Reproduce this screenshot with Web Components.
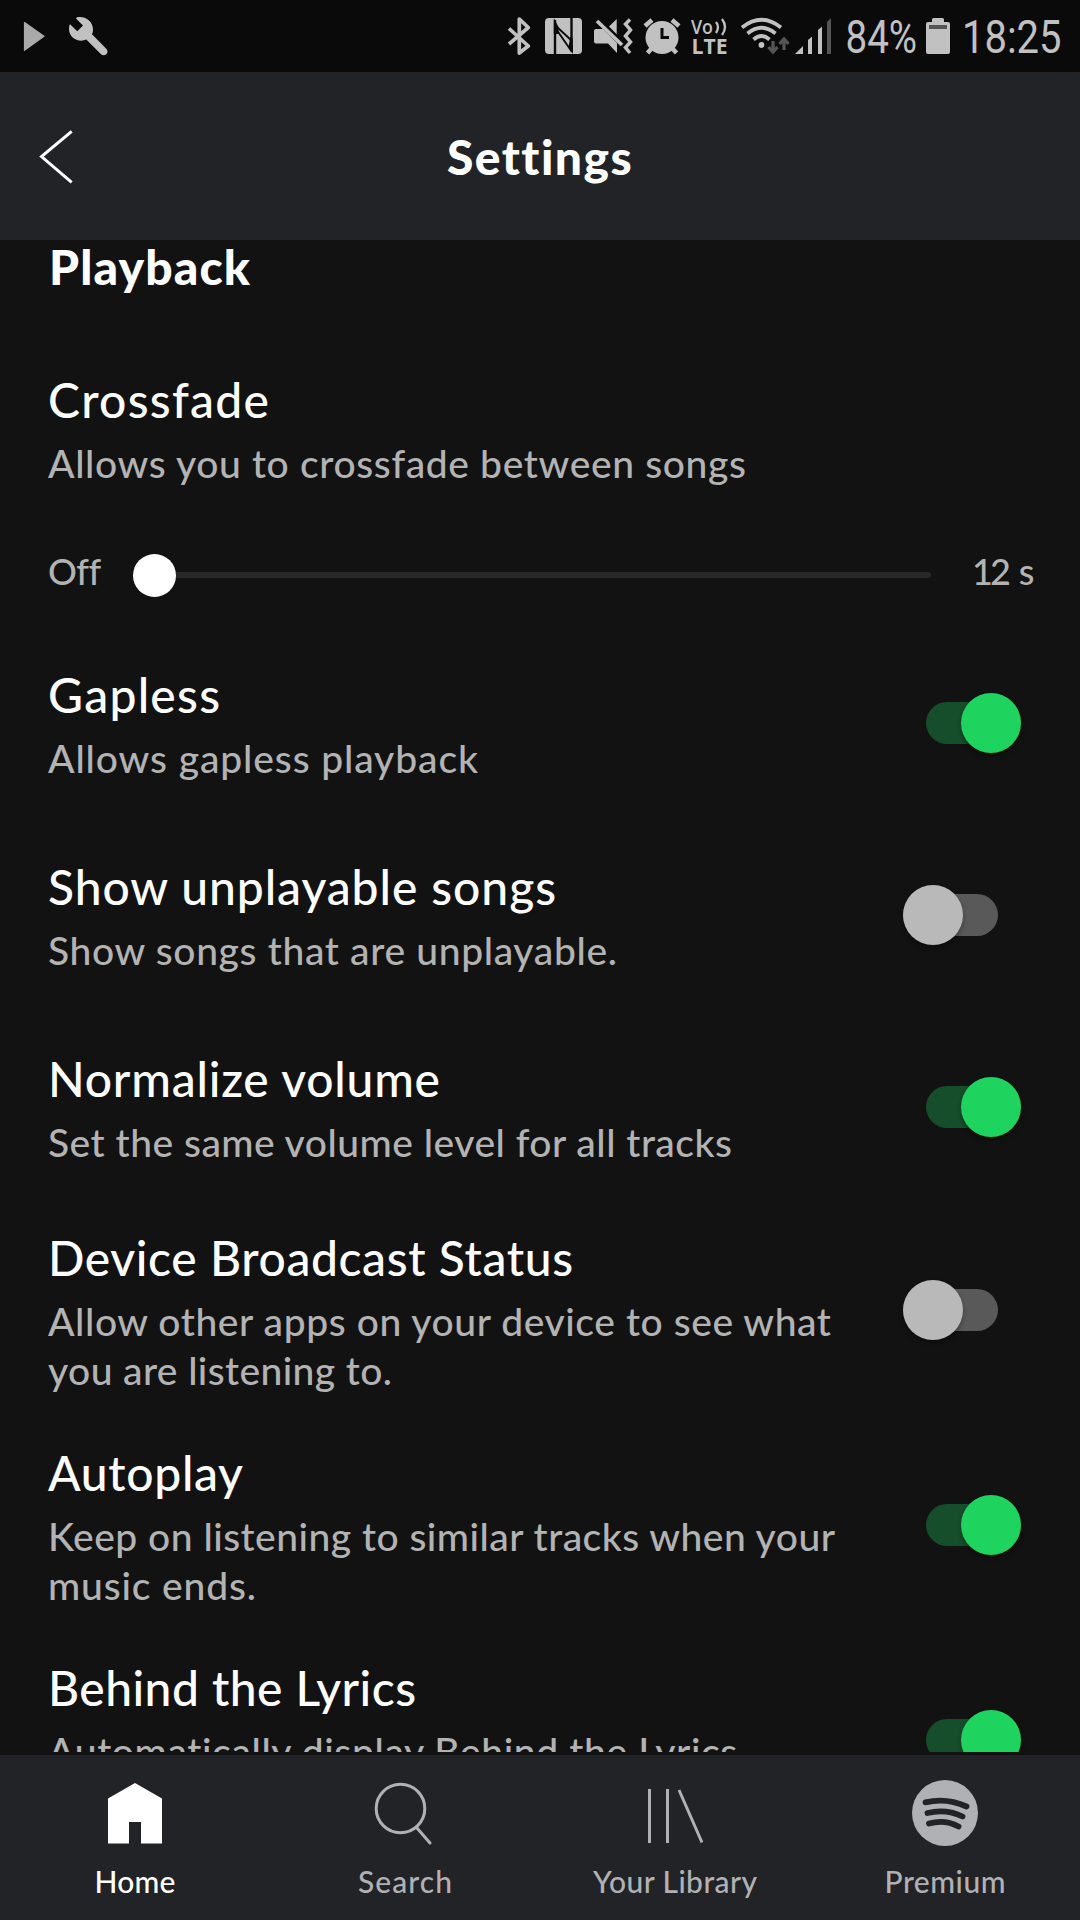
<!DOCTYPE html>
<html lang="en">
<head>
<meta charset="utf-8">
<title>Settings</title>
<style>
html,body{margin:0;padding:0;background:#121212}
body{width:1080px;height:1920px;overflow:hidden;font-family:Lato,"Open Sans",sans-serif}
</style>
</head>
<body>
<settings-screen></settings-screen>
<script>
const define = (name, html, ready) => {
  const t = document.createElement('template');
  t.innerHTML = html;
  customElements.define(name, class extends HTMLElement {
    constructor() { super(); this.attachShadow({mode: 'open'}).append(t.content.cloneNode(true)); }
    connectedCallback() { if (ready) ready(this, this.shadowRoot); }
  });
};

/* A line of text tracked so that it fills the width given in its w attribute. */
define('tracked-text', `<style>:host{display:block;white-space:nowrap}span{display:inline-block}</style><span></span>`, (el, root) => {
  const s = root.querySelector('span'), text = el.getAttribute('text');
  s.textContent = text;
  const target = +el.getAttribute('w');
  s.style.letterSpacing = (target - s.getBoundingClientRect().width) / (text.length - 1) + 'px';
  s.style.width = target + 'px';
});

define('status-bar', `<style>:host{display:block;height:72px;background:#0a0a0a}svg{display:block}</style>
<svg width="1080" height="72" viewBox="0 0 1080 72" fill="#c1c1c1">
  <path d="M24.5 22.5 44 36.3 24.5 50.3Z" fill="#aaa" stroke="#aaa" stroke-width="1.2" stroke-linejoin="round"/>
  <path d="M77 17.3C86 15.6 93 22 93 29.5C93 31.5 92.6 33 92 34.3L106.3 48.7C110 53 104.5 57 101 54.2L86.3 39.6C78.5 43 69 38 69 29C69 27 69.2 25.5 70 24.3L77.3 31.3 83 25.6 76 18.5Z"/>
  <path d="M509 28.5 528.3 46 519.3 53V19L528.3 27.5 509 44" fill="none" stroke="#c1c1c1" stroke-width="3.7" stroke-linejoin="round"/>
  <rect x="545" y="18" width="37" height="36" rx="4"/>
  <path d="M555 20V54M571.5 18V50" stroke="#0a0a0a" stroke-width="2.4" fill="none"/>
  <path d="M557.5 27.5 571 40M557.5 31 572 52" stroke="#0a0a0a" stroke-width="1.9" fill="none"/><path d="M553.8 18 558.5 27V34H553.8ZM573 54 568.5 47 570.3 37 572.7 38Z" fill="#0a0a0a"/>
  <path d="M594 30.5Q594 29 596 29H603L617 43V53L608 43.5H596Q594 43.5 594 41.5ZM609 26.5 616.7 19V34.2Z"/>
  <path d="M597 21 622 45" stroke="#c1c1c1" stroke-width="3.8"/>
  <path d="M630 19.5 625.5 24 630.5 30 625.5 36 630.5 42 625.5 47.5 630 53" fill="none" stroke="#c1c1c1" stroke-width="3.5"/>
  <circle cx="662" cy="37.5" r="16.5"/><path d="M645 26 652 20M672 20 679 26M652 48 647.5 53M672 48 676.5 53" stroke="#c1c1c1" stroke-width="4.5"/>
  <path d="M662 28V37.5H669" fill="none" stroke="#0a0a0a" stroke-width="3"/>
  <g font-family="Open Sans,sans-serif" font-weight="600"><text x="691" y="34" font-size="19" textLength="22" lengthAdjust="spacingAndGlyphs">Vo</text><text x="691.5" y="54" font-size="20.5" font-weight="700" textLength="36" lengthAdjust="spacingAndGlyphs">LTE</text></g>
  <path d="M716 22Q720 27 716 33M722 19Q728 27 722 35" fill="none" stroke="#c1c1c1" stroke-width="2.3"/>
  <g fill="none" stroke="#c1c1c1" stroke-width="3.7"><path d="M742 27.5Q761.5 12 781 27.5M747.5 33.5Q761.5 22 775.5 33.5M753.5 39.5Q761.5 32.5 769.5 39.5"/></g><circle cx="761.5" cy="45" r="2.9"/>
  <path d="M773 41V51M768.5 47 773 52 777.5 47M784 50V40M779.5 44 784 39 788.5 44" stroke="#555" stroke-width="3.3" fill="none"/>
  <path d="M795 54 803 46V54ZM808 40 812 36.5V54H808ZM818 30 822 26.5V54H818Z"/><path d="M827 22 831 18V54H827Z" fill="#555"/>
  <g font-family="Roboto,sans-serif" font-size="45.5"><text x="845.5" y="53" textLength="71.5" lengthAdjust="spacingAndGlyphs">84%</text><text x="962" y="53" textLength="99.5" lengthAdjust="spacingAndGlyphs">18:25</text></g>
  <path d="M926 24Q926 22 928 22H932V19.5Q932 18 933.5 18H942.5Q944 18 944 19.5V22H948Q950 22 950 24V52Q950 54 948 54H928Q926 54 926 52Z"/><rect x="929" y="25" width="18" height="4" fill="#555"/>
</svg>`);

define('app-header', `<style>:host{display:grid;grid-template-columns:1fr auto 1fr;height:168px;background:#222326;color:#fff;align-items:center;font-weight:900;font-size:48px}
svg{display:block;margin-left:38px}tracked-text{padding:1px 3px 0 0}</style>
<svg width="40" height="60" viewBox="38 126 40 60"><path d="M71.7 131.3 41.5 156.6 71.7 182.3" fill="none" stroke="#fff" stroke-width="3"/></svg>
<tracked-text text="Settings" w="183"></tracked-text><i></i>`);

define('toggle-switch', `<style>:host{display:flex;align-items:center;width:124px;height:62px;flex:none}
.track{width:95px;height:42px;border-radius:21px;background:#595959;display:flex;align-items:center;margin-left:2.5px}
.knob{width:60px;height:60px;border-radius:50%;background:#b9b9b9;flex:none;box-shadow:0 3px 5px rgba(0,0,0,.3)}
:host([on]) .track{background:#164e2b;margin-left:26px;justify-content:flex-end}
:host([on]) .knob{background:#1ed45f}</style><div class="track"><div class="knob"></div></div>`);

define('setting-row', `<style>:host{display:flex;justify-content:space-between;align-items:center;box-sizing:border-box;padding:0 56px 0 48px;min-height:192px;flex:none}
:host([tall]){min-height:215px}
.text{display:flex;flex-direction:column;gap:11px;padding-top:5px}
.sub{font-size:39px;line-height:49px;color:#b3b3b3;font-weight:500}</style>
<div class="text"><slot name="title"></slot><div class="sub"><slot></slot></div></div><slot name="control"></slot>`);

define('volume-slider', `<style>:host{display:flex;align-items:center;height:60px;font-size:36px;color:#b3b3b3;font-weight:500;padding:0 49px 0 48px;flex:none}
.track{width:777px;height:6px;border-radius:3px;background:#282828;display:flex;align-items:center;margin:8px 41px 0 54px;flex:none}
.knob{width:43px;height:43px;border-radius:50%;background:#fff;margin-left:-21px;flex:none}
.end{display:flex;gap:11px}
tracked-text{flex:none}</style>
<tracked-text text="Off" w="52"></tracked-text><div class="track"><div class="knob"></div></div><div class="end"><span style="letter-spacing:-3px">12</span><span>s</span></div>`);

define('nav-item', `<style>:host{display:flex;flex-direction:column;align-items:center;width:270px;color:#b0b1b5;font-size:30px;line-height:36px;font-weight:500;padding-top:19px;gap:13px;box-sizing:border-box}
:host([active]){color:#fff}::slotted(svg){display:block}</style><slot name="icon"></slot><slot></slot>`);

define('settings-screen', `<style>
:host{display:flex;flex-direction:column;width:1080px;height:1920px;background:#121212;color:#fff}
main{height:1512px;overflow:hidden;display:flex;flex-direction:column}
.heading{padding-left:49px;font-size:48px;line-height:54px;font-weight:900;flex:none}
.t{font-size:48px;line-height:56px;color:#fff;font-weight:500}
.x{margin-top:37px}
volume-slider{margin-top:18px}
.first{margin-top:25.6px}
nav{display:flex;height:165px;background:#222326;margin-top:3px}
</style>
<status-bar></status-bar><app-header></app-header>
<main>
<tracked-text class="heading" text="Playback" w="201"></tracked-text>
<setting-row class="x"><tracked-text slot="title" class="t" text="Crossfade" w="221"></tracked-text><tracked-text text="Allows you to crossfade between songs" w="698"></tracked-text></setting-row>
<volume-slider></volume-slider>
<setting-row class="first"><tracked-text slot="title" class="t" text="Gapless" w="172"></tracked-text><tracked-text text="Allows gapless playback" w="430"></tracked-text><toggle-switch slot="control" on></toggle-switch></setting-row>
<setting-row><tracked-text slot="title" class="t" text="Show unplayable songs" w="508"></tracked-text><tracked-text text="Show songs that are unplayable." w="569"></tracked-text><toggle-switch slot="control"></toggle-switch></setting-row>
<setting-row><tracked-text slot="title" class="t" text="Normalize volume" w="392"></tracked-text><tracked-text text="Set the same volume level for all tracks" w="684"></tracked-text><toggle-switch slot="control" on></toggle-switch></setting-row>
<setting-row tall><tracked-text slot="title" class="t" text="Device Broadcast Status" w="525"></tracked-text><tracked-text text="Allow other apps on your device to see what" w="783"></tracked-text><tracked-text text="you are listening to." w="344"></tracked-text><toggle-switch slot="control"></toggle-switch></setting-row>
<setting-row tall><tracked-text slot="title" class="t" text="Autoplay" w="195"></tracked-text><tracked-text text="Keep on listening to similar tracks when your" w="787"></tracked-text><tracked-text text="music ends." w="208"></tracked-text><toggle-switch slot="control" on></toggle-switch></setting-row>
<setting-row tall><tracked-text slot="title" class="t" text="Behind the Lyrics" w="368"></tracked-text><tracked-text text="Automatically display Behind the Lyrics" w="690"></tracked-text><tracked-text text="&nbsp;&nbsp;" w="18"></tracked-text><toggle-switch slot="control" on></toggle-switch></setting-row>
</main>
<nav>
<nav-item active><svg slot="icon" width="80" height="76" viewBox="95 1774 80 76"><path d="M108 1798.5 135 1783 162 1798.5V1843.5H141V1822H129V1843.5H108Z" fill="#fff"/></svg><tracked-text text="Home" w="81"></tracked-text></nav-item>
<nav-item><svg slot="icon" width="80" height="76" viewBox="365 1774 80 76" fill="none" stroke="#b0b1b5" stroke-width="3"><circle cx="400.5" cy="1808.5" r="24.3"/><path d="M416.5 1827.5 430 1843" stroke-linecap="round"/></svg><tracked-text text="Search" w="94"></tracked-text></nav-item>
<nav-item><svg slot="icon" width="80" height="76" viewBox="635 1774 80 76" fill="none" stroke="#b0b1b5" stroke-width="3"><path d="M649.5 1789V1843M667.5 1789V1843M679 1790 702 1842.5"/></svg><tracked-text text="Your Library" w="164"></tracked-text></nav-item>
<nav-item><svg slot="icon" width="80" height="76" viewBox="905 1774 80 76"><circle cx="945" cy="1813" r="33" fill="#b0b1b5"/><path d="M925.5 1802.3Q947 1797.5 966.5 1806.5M927.5 1813Q946 1808.5 962.5 1816.5M929 1823.5Q945 1819 958.5 1826.5" fill="none" stroke="#222326" stroke-width="5.8" stroke-linecap="round"/></svg><tracked-text text="Premium" w="121"></tracked-text></nav-item>
</nav>`);
</script>
</body>
</html>
